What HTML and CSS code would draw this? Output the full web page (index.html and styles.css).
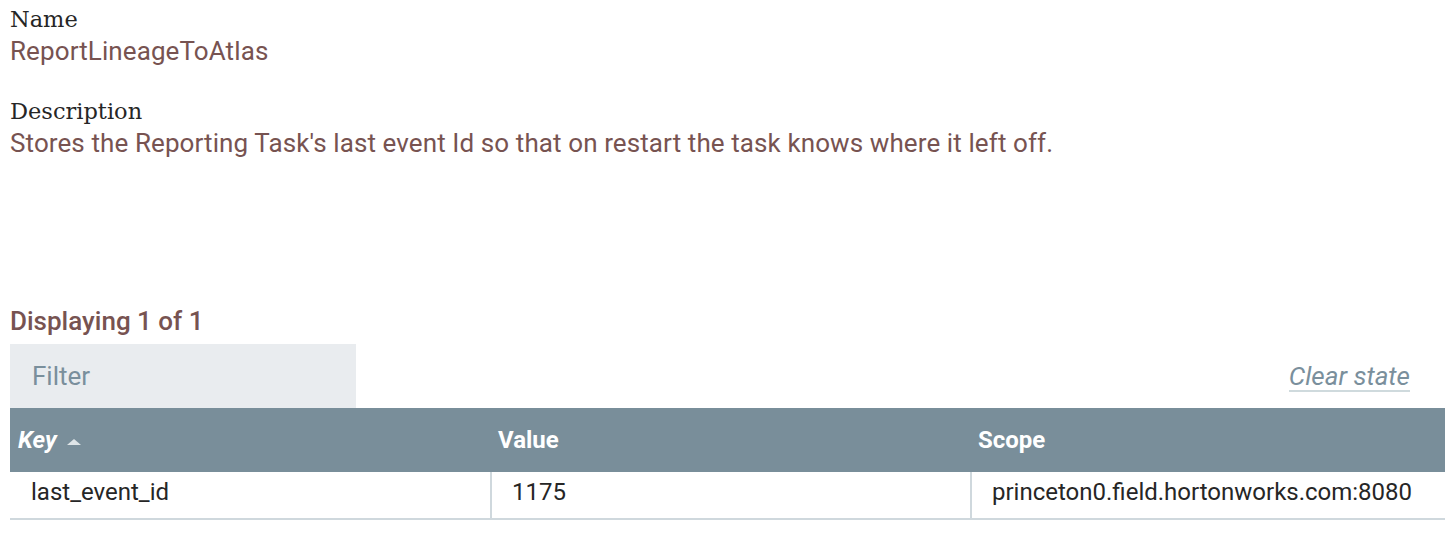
FILE: index.html
```html
<!DOCTYPE html>
<html>
<head>
<meta charset="utf-8">
<link rel="stylesheet" href="styles.css">
</head>
<body>
<div class="state-dialog">
  <div class="setting">
    <div class="setting-name">Name</div>
    <div class="setting-value">ReportLineageToAtlas</div>
  </div>
  <div class="setting setting-desc">
    <div class="setting-name">Description</div>
    <div class="setting-value">Stores the Reporting Task's last event Id so that on restart the task knows where it left off.</div>
  </div>
  <div class="displaying">Displaying 1 of 1</div>
  <div class="toolbar">
    <div class="filter">Filter</div>
    <a class="clear-state">Clear state</a>
  </div>
  <div class="grid">
    <div class="hcell hcell-sorted">Key<span class="sort-asc"></span></div>
    <div class="hcell">Value</div>
    <div class="hcell">Scope</div>
    <div class="cell">last_event_id</div>
    <div class="cell cell-div">1175</div>
    <div class="cell cell-div">princeton0.field.hortonworks.com:8080</div>
  </div>
</div>
</body>
</html>
```
FILE: styles.css
```css
html, body {
  margin: 0;
  padding: 0;
  background: #ffffff;
}
body {
  font-family: Roboto, "Liberation Sans", sans-serif;
  font-size: 26px;
  color: #262626;
}
.state-dialog {
  padding: 4px 0 0 10px;
}
.setting-name {
  font-family: "DejaVu Serif", "Liberation Serif", serif;
  font-size: 22.5px;
  line-height: 30px;
  color: #262626;
}
.setting-value {
  padding-top: 2px;
  line-height: 31px;
  letter-spacing: 0.1px;
  color: #775351;
}
.setting-desc {
  margin-top: 29px;
}
.displaying {
  margin-top: 147px;
  line-height: 31px;
  font-weight: 500;
  color: #775351;
}
.toolbar {
  margin-top: 7px;
  display: flex;
  justify-content: space-between;
  align-items: flex-start;
}
.filter {
  width: 324px;
  height: 64px;
  line-height: 64px;
  padding-left: 22px;
  background: #e9ecef;
  color: #7a8f9c;
}
.clear-state {
  margin-top: 17px;
  margin-right: 35px;
  font-style: italic;
  color: #7a8f9c;
  line-height: 31px;
  height: 29px;
  border-bottom: 2px solid #cfdadd;
}
.grid {
  display: grid;
  grid-template-columns: 480px 480px 1fr;
  font-size: 24px;
}
.hcell {
  height: 64px;
  line-height: 64px;
  padding-left: 8px;
  background: #798e9a;
  color: #ffffff;
  font-weight: 700;
  display: flex;
  align-items: center;
}
.hcell-sorted {
  font-style: italic;
}
.sort-asc {
  display: inline-block;
  width: 0;
  height: 0;
  margin-left: 10px;
  margin-top: 4px;
  border-left: 7px solid transparent;
  border-right: 7px solid transparent;
  border-bottom: 6px solid #dfe5e8;
}
.cell {
  height: 36px;
  line-height: 36px;
  padding: 2px 0 8px 21px;
  border-bottom: 2px solid #cfd8dd;
  white-space: nowrap;
}
.cell-div {
  border-left: 2px solid #cfd8dd;
  padding-left: 20px;
}
```
